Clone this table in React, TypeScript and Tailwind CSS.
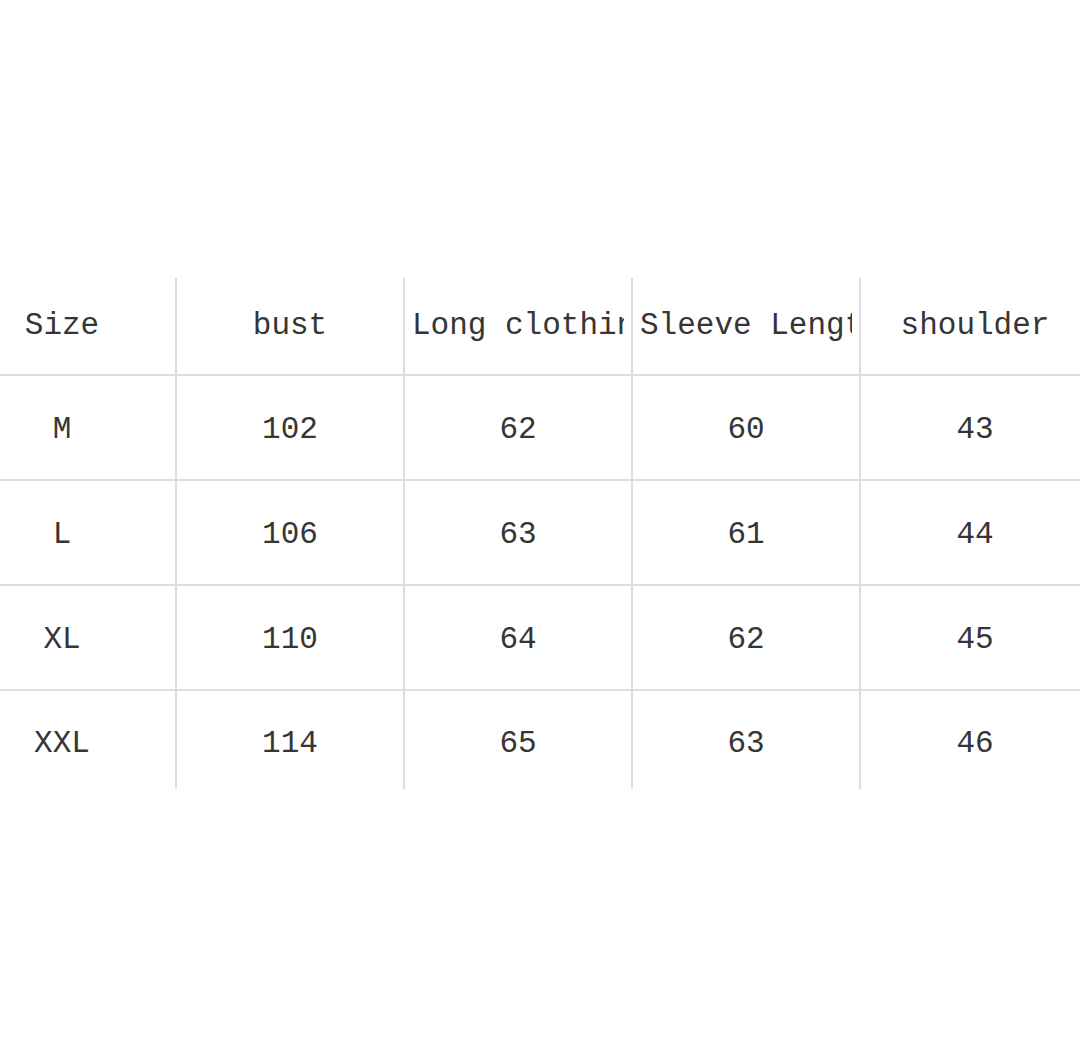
const header = ['Size', 'bust', 'Long clothing', 'Sleeve Length', 'shoulder'];

const rows = [
  ['M', '102', '62', '60', '43'],
  ['L', '106', '63', '61', '44'],
  ['XL', '110', '64', '62', '45'],
  ['XXL', '114', '65', '63', '46'],
];

function Cell({ text, last, pad }: { text: string; last: boolean; pad: string }) {
  return (
    <div
      className={
        'flex items-center justify-center overflow-hidden px-[7px] ' +
        pad +
        ' ' +
        (last ? '' : 'border-r-2 border-[#dcdce1]')
      }
    >
      <span className="block w-full overflow-hidden whitespace-nowrap text-center">{text}</span>
    </div>
  );
}

export default function App() {
  const all = [header, ...rows];
  return (
    <div
      className="min-h-screen w-[1080px] overflow-hidden bg-white pt-[278px] text-[31px] text-[#353535]"
      style={{ fontFamily: '"Liberation Mono", "DejaVu Sans Mono", monospace' }}
    >
      <div className="ml-[-51px] w-[1140px]">
        {all.map((row, i) => {
          const isLast = i === all.length - 1;
          const pad = i === 0 ? 'pt-0' : isLast ? 'pt-[8px]' : 'pt-[5px]';
          return (
            <div
              key={i}
              className={
                'grid grid-cols-[228px_228px_228px_228px_228px] ' +
                (i === 0
                  ? 'h-[98px] border-b-2 border-[#dcdce1]'
                  : isLast
                    ? 'h-[98px]'
                    : 'h-[105px] border-b-2 border-[#dcdce1]')
              }
            >
              {row.map((t, j) => (
                <Cell key={j} text={t} last={j === row.length - 1} pad={pad} />
              ))}
            </div>
          );
        })}
      </div>
    </div>
  );
}
